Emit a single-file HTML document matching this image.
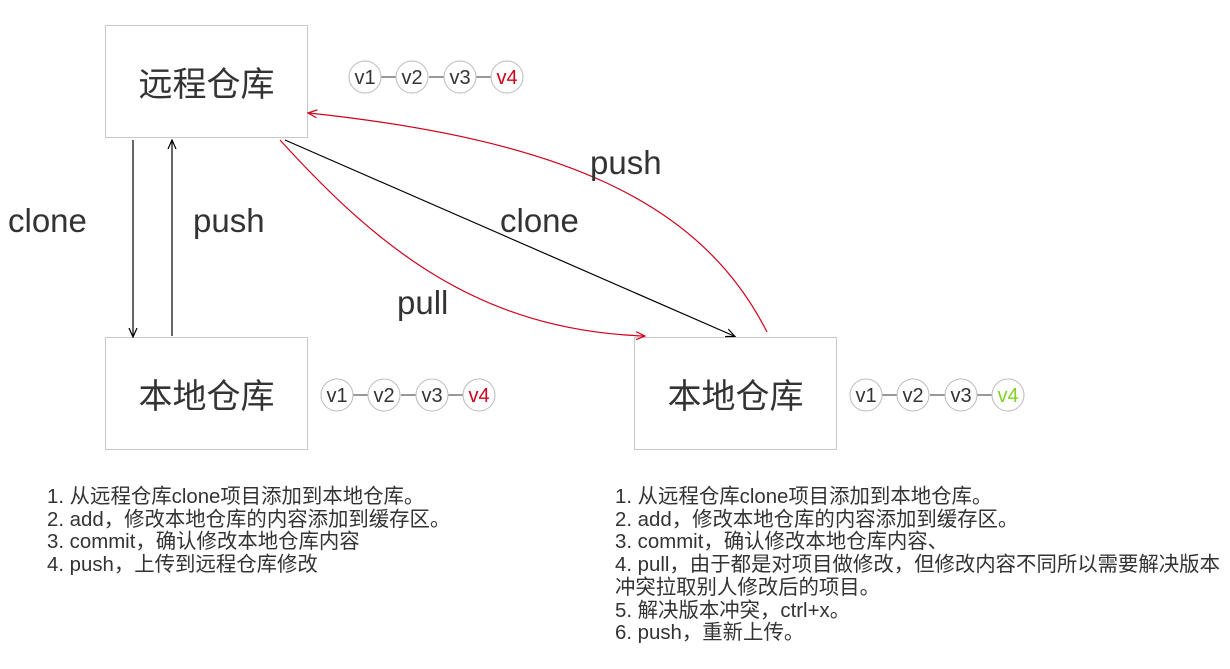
<!DOCTYPE html>
<html><head><meta charset="utf-8"><style>
body{margin:0;width:1230px;height:669px;background:#fff;position:relative;overflow:hidden;font-family:"Liberation Sans","Noto Sans CJK SC",sans-serif;color:#333}
.box{position:absolute;border:1px solid #c8c8c8;box-sizing:border-box;width:203px;height:113px;display:flex;align-items:center;justify-content:center;font-size:34px;color:#333}
.t{position:absolute;font-size:33px;color:#333;line-height:1}
.list{position:absolute;font-size:20.4px;line-height:22.7px;color:#333;white-space:nowrap}
</style></head><body>
<div class="box" style="left:105px;top:25px">远程仓库</div>
<div class="box" style="left:105px;top:337px">本地仓库</div>
<div class="box" style="left:634px;top:337px">本地仓库</div>
<svg width="1230" height="669" style="position:absolute;left:0;top:0">
<defs>
<marker id="ab" markerWidth="10" markerHeight="10" refX="8" refY="5" orient="auto" markerUnits="userSpaceOnUse"><path d="M0,1 L9,5 L0,9" fill="none" stroke="#000" stroke-width="1.2"/></marker>
<marker id="ar" markerWidth="10" markerHeight="10" refX="8" refY="5" orient="auto" markerUnits="userSpaceOnUse"><path d="M0,1 L9,5 L0,9" fill="none" stroke="#d0021b" stroke-width="1.2"/></marker>
</defs>
<g stroke="#000" stroke-width="1.2" fill="none">
<line x1="133" y1="140" x2="133" y2="336" marker-end="url(#ab)"/>
<line x1="172" y1="336" x2="172" y2="141" marker-end="url(#ab)"/>
<line x1="285" y1="140" x2="734" y2="336" marker-end="url(#ab)"/>
</g>
<g stroke="#d0021b" stroke-width="1.2" fill="none">
<path d="M280,140 C380,250 480,330 644,336" marker-end="url(#ar)"/>
<path d="M767,332 C700,200 560,140 309,113" marker-end="url(#ar)"/>
</g>
<g font-family="Liberation Sans" font-size="20" text-anchor="middle" stroke-width="1">
<g transform="translate(365,77)">
<line x1="16" y1="0" x2="31" y2="0" stroke="#333"/><line x1="64" y1="0" x2="79" y2="0" stroke="#333"/><line x1="111" y1="0" x2="126" y2="0" stroke="#333"/>
<circle r="16" fill="#fff" stroke="#bbb"/><circle cx="47" r="16" fill="#fff" stroke="#bbb"/><circle cx="95" r="16" fill="#fff" stroke="#bbb"/><circle cx="142" r="16" fill="#fff" stroke="#bbb"/>
<text y="7" fill="#333">v1</text><text x="47" y="7" fill="#333">v2</text><text x="95" y="7" fill="#333">v3</text><text x="142" y="7" fill="#d0021b">v4</text></g>
<g transform="translate(337,395)">
<line x1="16" y1="0" x2="31" y2="0" stroke="#333"/><line x1="64" y1="0" x2="79" y2="0" stroke="#333"/><line x1="111" y1="0" x2="126" y2="0" stroke="#333"/>
<circle r="16" fill="#fff" stroke="#bbb"/><circle cx="47" r="16" fill="#fff" stroke="#bbb"/><circle cx="95" r="16" fill="#fff" stroke="#bbb"/><circle cx="142" r="16" fill="#fff" stroke="#bbb"/>
<text y="7" fill="#333">v1</text><text x="47" y="7" fill="#333">v2</text><text x="95" y="7" fill="#333">v3</text><text x="142" y="7" fill="#d0021b">v4</text></g>
<g transform="translate(866,395)">
<line x1="16" y1="0" x2="31" y2="0" stroke="#333"/><line x1="64" y1="0" x2="79" y2="0" stroke="#333"/><line x1="111" y1="0" x2="126" y2="0" stroke="#333"/>
<circle r="16" fill="#fff" stroke="#bbb"/><circle cx="47" r="16" fill="#fff" stroke="#bbb"/><circle cx="95" r="16" fill="#fff" stroke="#bbb"/><circle cx="142" r="16" fill="#fff" stroke="#bbb"/>
<text y="7" fill="#333">v1</text><text x="47" y="7" fill="#333">v2</text><text x="95" y="7" fill="#333">v3</text><text x="142" y="7" fill="#7ed321">v4</text></g>
</g>
</svg>
<div class="t" style="left:8px;top:204px">clone</div>
<div class="t" style="left:193px;top:204px">push</div>
<div class="t" style="left:500px;top:204px">clone</div>
<div class="t" style="left:590px;top:146px">push</div>
<div class="t" style="left:397px;top:286px">pull</div>
<div class="list" style="left:47px;top:486px">1. 从远程仓库clone项目添加到本地仓库。<br>2. add，修改本地仓库的内容添加到缓存区。<br>3. commit，确认修改本地仓库内容<br>4. push，上传到远程仓库修改</div>
<div class="list" style="left:615px;top:486px">1. 从远程仓库clone项目添加到本地仓库。<br>2. add，修改本地仓库的内容添加到缓存区。<br>3. commit，确认修改本地仓库内容、<br>4. pull，由于都是对项目做修改，但修改内容不同所以需要解决版本<br>冲突拉取别人修改后的项目。<br>5. 解决版本冲突，ctrl+x。<br>6. push，重新上传。</div>
</body></html>
